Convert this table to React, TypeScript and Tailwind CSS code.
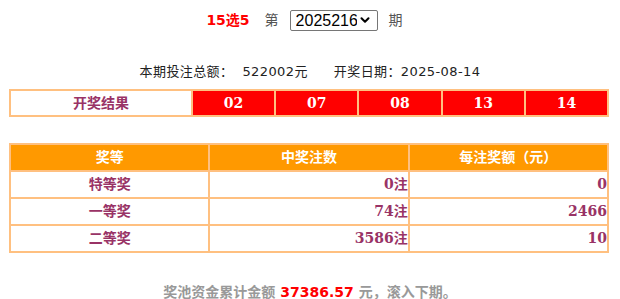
import { ChevronDown } from 'lucide-react';

const balls = ['02', '07', '08', '13', '14'];

const prizes = [
  { name: '特等奖', count: '0', amount: '0' },
  { name: '一等奖', count: '74', amount: '2466' },
  { name: '二等奖', count: '3586', amount: '10' },
];

const cjk = "font-['DejaVu_Sans','Noto_Sans_CJK_SC',sans-serif]";
const serif = "font-['DejaVu_Serif','Noto_Sans_CJK_SC',serif]";

export default function App() {
  return (
    <div className={`w-[620px] h-[299px] bg-white overflow-hidden ${cjk}`}>
      {/* issue picker */}
      <div className="flex items-center justify-center pt-[10px] pr-[11px] h-[31px]">
        <span className="text-[14px] font-bold text-[#ff0000]">15选5</span>
        <span className="ml-[15px] text-[14px] text-[#555]">第</span>
        <div className="relative ml-[11px]">
          <select
            className="appearance-none h-[21px] w-[88px] border border-[#767676] rounded-[2px] pl-[5px] pr-[20px] text-[16px] leading-[19px] text-black font-['Liberation_Sans',sans-serif] bg-white"
            defaultValue="2025216"
          >
            <option>2025216</option>
          </select>
          <ChevronDown
            size={14}
            strokeWidth={3.5}
            className="absolute right-[6px] top-[4px] pointer-events-none text-black"
          />
        </div>
        <span className="ml-[11px] text-[14px] text-[#555]">期</span>
      </div>

      <div className="mt-[33px] flex justify-center text-[13px] text-[#222] leading-[16px] tracking-[0.4px]">
        <span>本期投注总额：</span>
        <span className="ml-[9px]">522002元</span>
        <span className="ml-[26px]">开奖日期：2025-08-14</span>
      </div>

      {/* draw result */}
      <div className="mt-[9px] ml-[9px] w-[600px] grid grid-cols-[180px_repeat(5,1fr)] gap-[2px] p-[2px] bg-[#ffc080]">
        <div className="h-[24px] bg-white flex items-center justify-center text-[14px] font-bold text-[#993366]">
          开奖结果
        </div>
        {balls.map((b) => (
          <div
            key={b}
            className={`h-[24px] bg-[#ff0000] flex items-center justify-center text-[14px] font-bold text-white ${serif}`}
          >
            {b}
          </div>
        ))}
      </div>

      {/* prize table */}
      <div className="mt-[26px] ml-[9px] w-[600px] grid grid-cols-3 gap-[2px] p-[2px] bg-[#ffc080] text-[14px] font-bold">
        {['奖等', '中奖注数', '每注奖额（元）'].map((h) => (
          <div key={h} className="h-[25px] bg-[#ff9900] text-white flex items-center justify-center">
            {h}
          </div>
        ))}
        {prizes.map((p) => (
          <>
            <div key={p.name} className="h-[25px] bg-white text-[#993366] flex items-center justify-center">
              {p.name}
            </div>
            <div className={`h-[25px] bg-white text-[#993366] flex items-center justify-end ${serif}`}>
              {p.count}注
            </div>
            <div className={`h-[25px] bg-white text-[#993366] flex items-center justify-end ${serif}`}>
              {p.amount}
            </div>
          </>
        ))}
      </div>

      <div className="mt-[31px] flex justify-center text-[14px] font-bold text-[#999] leading-[16px]">
        <span>奖池资金累计金额</span>
        <span className="mx-[5px] text-[#ff0000]">37386.57</span>
        <span>元，滚入下期。</span>
      </div>
    </div>
  );
}
